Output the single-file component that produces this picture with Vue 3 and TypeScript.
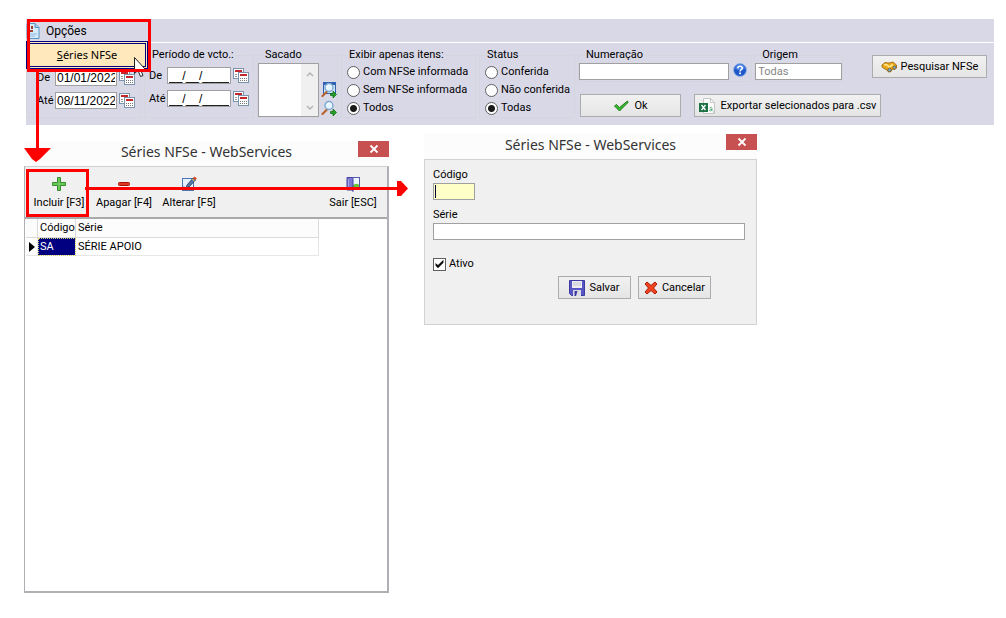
<script setup lang="ts">
import { ref } from 'vue'

interface Choice { value: string; label: string }
interface Serie { codigo: string; serie: string }

const emissaoDe = ref('01/01/2022')
const emissaoAte = ref('08/11/2022')
const vctoDe = ref('__/__/____')
const vctoAte = ref('__/__/____')
const sacado = ref('')
const numeracao = ref('')
const origem = ref('Todas')
const codigo = ref('')
const serie = ref('')
const ativo = ref(true)

const itens = ref('todos')
const itensChoices: Choice[] = [
  { value: 'com', label: 'Com NFSe informada' },
  { value: 'sem', label: 'Sem NFSe informada' },
  { value: 'todos', label: 'Todos' },
]
const status = ref('todas')
const statusChoices: Choice[] = [
  { value: 'conferida', label: 'Conferida' },
  { value: 'nao', label: 'Não conferida' },
  { value: 'todas', label: 'Todas' },
]
const series: Serie[] = [{ codigo: 'SA', serie: 'SÉRIE APOIO' }]
</script>

<template>
  <div class="page">
    <svg class="defs" width="0" height="0" aria-hidden="true">
      <symbol id="calendars" viewBox="0 0 16 16">
        <rect x=".5" y=".5" width="10" height="10" fill="#fff" stroke="#7b93ab" />
        <rect x="2" y="2" width="7" height="2" fill="#c3272b" />
        <path d="M2 6.500h2M2 8.500h2" stroke="#999" />
        <rect x="5.500" y="4.500" width="10" height="10" fill="#fff" stroke="#7b93ab" />
        <rect x="7" y="6" width="7" height="2" fill="#c3272b" />
        <path d="M7 10.500h1M9 10.500h1M11 10.500h1M13 10.500h1M7 12.500h1M9 12.500h1M11 12.500h1M13 12.500h1" stroke="#777" />
      </symbol>
      <symbol id="lens" viewBox="0 0 16 16">
        <path d="M6 9.500 1.500 14" stroke="#b5622b" stroke-width="2.200" stroke-linecap="round" />
        <circle cx="8" cy="5.500" r="4" fill="#e4f5ff" stroke="#7da7cc" stroke-width="1.400" />
        <path d="M6 5q.5-2 2.500-2" fill="none" stroke="#fff" />
        <path d="M9.500 11.500h2.500V9l3.500 3.500L12 16v-2.500H9.500z" fill="#25a128" stroke="#09690c" stroke-width=".7" />
      </symbol>
      <symbol id="close" viewBox="0 0 10 10">
        <path d="m1.500 1.500 7 7m0-7-7 7" stroke="#fff" stroke-width="1.800" />
      </symbol>
    </svg>

    <section class="panel">
      <nav class="menubar">
        <svg class="menu-icon" viewBox="0 0 14 16" aria-hidden="true">
          <path d="M1 .5h8l4 4v11H1z" fill="#d5eafa" stroke="#5c93c0" />
          <path d="M9 .5v4h4" fill="#9fc9e8" stroke="#5c93c0" />
          <path d="M1 3h3v2H1zm4 0h2v3H5zM1 6h2v3H1zm3 1h3v2H4z" fill="#a3402c" />
          <path d="M3 11h8M3 13h6" stroke="#8fbbdc" />
        </svg>
        <button type="button" class="menu-button">Opções</button>
        <button type="button" class="menu-item"><span><u>S</u>éries NFSe</span></button>
      </nav>

      <form class="filters" @submit.prevent>
        <fieldset class="group dates first">
          <legend>&nbsp;</legend>
          <div class="date-row">
            <label for="em-de">De</label><input id="em-de" v-model="emissaoDe" type="text" />
            <button type="button" class="icon-button" aria-label="Calendário"><svg><use href="#calendars" /></svg></button>
          </div>
          <div class="date-row">
            <label for="em-ate">Até</label><input id="em-ate" v-model="emissaoAte" type="text" />
            <button type="button" class="icon-button" aria-label="Calendário"><svg><use href="#calendars" /></svg></button>
          </div>
        </fieldset>

        <fieldset class="group dates">
          <legend>Período de vcto.:</legend>
          <div class="date-row">
            <label for="v-de">De</label><input id="v-de" v-model="vctoDe" type="text" />
            <button type="button" class="icon-button" aria-label="Calendário"><svg><use href="#calendars" /></svg></button>
          </div>
          <div class="date-row">
            <label for="v-ate">Até</label><input id="v-ate" v-model="vctoAte" type="text" />
            <button type="button" class="icon-button" aria-label="Calendário"><svg><use href="#calendars" /></svg></button>
          </div>
        </fieldset>

        <fieldset class="group">
          <legend>Sacado</legend>
          <div class="sacado">
            <div class="memo">
              <textarea v-model="sacado" aria-label="Sacado"></textarea>
              <div class="memo-scroll" aria-hidden="true">
                <svg viewBox="0 0 8 6"><path d="m1 5 3-3 3 3" fill="none" stroke="#b4b4b4" stroke-width="1.500" /></svg>
                <svg viewBox="0 0 8 6"><path d="m1 1 3 3 3-3" fill="none" stroke="#b4b4b4" stroke-width="1.500" /></svg>
              </div>
            </div>
            <div class="sacado-tools">
              <button type="button" class="icon-button" aria-label="Pesquisar sacado">
                <svg viewBox="0 0 16 16">
                  <rect x="2.500" y=".5" width="12" height="11" fill="#cfe2fa" stroke="#2f62b5" />
                  <path d="M3 2h11" stroke="#2f62b5" stroke-width="2" />
                  <use href="#lens" width="16" height="16" />
                </svg>
              </button>
              <button type="button" class="icon-button" aria-label="Localizar sacado"><svg><use href="#lens" /></svg></button>
            </div>
          </div>
        </fieldset>

        <fieldset class="group choices">
          <legend>Exibir apenas itens:</legend>
          <label v-for="c in itensChoices" :key="c.value">
            <input v-model="itens" type="radio" name="itens" :value="c.value" />{{ c.label }}
          </label>
        </fieldset>

        <fieldset class="group choices">
          <legend>Status</legend>
          <label v-for="c in statusChoices" :key="c.value">
            <input v-model="status" type="radio" name="status" :value="c.value" />{{ c.label }}
          </label>
        </fieldset>

        <div class="actions">
          <div class="actions-top">
            <fieldset class="group numeracao">
              <legend>Numeração</legend>
              <div class="field-row">
                <input v-model="numeracao" type="text" aria-label="Numeração" />
                <button type="button" class="icon-button help" aria-label="Ajuda">
                  <svg viewBox="0 0 14 14">
                    <circle cx="7" cy="7" r="6.500" fill="#1d57c8" stroke="#9bb7e6" />
                    <path d="M2 6a5 5 0 0 1 10 0q-5 2-10 0" fill="#5f94ee" opacity=".7" />
                    <path d="M4.800 5.300q.2-2 2.300-2t2.200 1.800q0 1-1.300 1.800-.9.500-.9 1.500" fill="none" stroke="#fff" stroke-width="1.600" />
                    <rect x="6.200" y="9.500" width="1.800" height="1.700" fill="#fff" />
                  </svg>
                </button>
              </div>
            </fieldset>
            <fieldset class="group origem">
              <legend>Origem</legend>
              <div class="field-row"><input v-model="origem" type="text" aria-label="Origem" disabled /></div>
            </fieldset>
            <button type="button" class="button search">
              <svg viewBox="0 0 16 16" width="16" height="16" aria-hidden="true">
                <path d="m1 6 3-2.500 4 .5 4-1 3.500 3v3l-2 1.500-2-.500L10 12.500 7.500 13 6 11 3 9.500 1 8z" fill="#e9a81c" stroke="#946010" stroke-width=".8" />
                <path d="m3 5.500 3 .5 2 2 4-2.500" fill="none" stroke="#ffe88a" stroke-width="1.500" />
                <circle cx="8.500" cy="11" r="1.800" fill="#6fa6cf" stroke="#7e5310" stroke-width=".7" />
                <circle cx="13.500" cy="8.500" r="1.600" fill="#6fa6cf" stroke="#7e5310" stroke-width=".7" />
              </svg>
              Pesquisar NFSe
            </button>
          </div>
          <div class="actions-bottom">
            <button type="submit" class="button ok">
              <svg viewBox="0 0 16 12" width="16" height="12" aria-hidden="true">
                <path d="m1.500 6 2-1.500L6.500 7.500 14.500 1 15 2.500 6.500 11z" fill="#37bd32" stroke="#14700f" stroke-width=".9" />
              </svg>
              Ok
            </button>
            <button type="button" class="button export">
              <svg viewBox="0 0 16 16" width="16" height="16" aria-hidden="true">
                <path d="M4.500.5h7l4 4v11h-11z" fill="#fafafa" stroke="#c6c6c6" />
                <path d="M11.500.5v4h4" fill="none" stroke="#c6c6c6" />
                <rect y="5" width="9" height="9" fill="#1e7145" />
                <path d="m2.500 7 4 5m0-5-4 5" stroke="#fff" stroke-width="1.300" />
                <path d="M10.500 10q2-1.200 2.500.2V13m0-1.500q-2.500-.2-2.500 1 1 1 2.500-.3M14 14h1" fill="none" stroke="#65b587" />
              </svg>
              Exportar selecionados para .csv
            </button>
          </div>
        </div>
      </form>
    </section>

    <main class="workspace">
      <section class="window list-window">
        <header class="titlebar">
          <h2>Séries NFSe - WebServices</h2>
          <button type="button" class="close" aria-label="Fechar"><svg><use href="#close" /></svg></button>
        </header>
        <div class="list-body">
          <div class="tools">
            <button type="button" class="tool">
              <svg viewBox="0 0 16 16" aria-hidden="true"><path d="M6.500 1.500h3v5h5v3h-5v5h-3v-5h-5v-3h5z" fill="#6cc85c" stroke="#348c2b" /></svg>
              Incluir [F3]
            </button>
            <button type="button" class="tool">
              <svg viewBox="0 0 16 16" aria-hidden="true"><rect x="2.500" y="6.500" width="11" height="3" rx="1" fill="#e2331f" stroke="#a31408" /></svg>
              Apagar [F4]
            </button>
            <button type="button" class="tool">
              <svg viewBox="0 0 16 16" aria-hidden="true">
                <rect x="1.500" y="2.500" width="11" height="12" fill="#e6f1fc" stroke="#4a74b4" />
                <path d="M2 14V9l5 5z" fill="#a4c4e8" />
                <path d="m5 12 1-3 6-7 2.500 2-6.500 7z" fill="#5578a8" stroke="#273e63" stroke-width=".8" />
                <path d="m12 2 1.500-1.500L16 2.500 14.500 4z" fill="#e24a22" />
                <path d="m11 3 2.500 2" stroke="#f3cb52" />
              </svg>
              Alterar [F5]
            </button>
            <button type="button" class="tool exit">
              <svg viewBox="0 0 16 16" aria-hidden="true">
                <rect x="5.500" y="1.500" width="9" height="12" fill="#eaf7ff" stroke="#5856ad" />
                <path d="M7 9.500q4-3 7-1V13H7z" fill="#67c83a" />
                <path d="M2 1.500h5l1 1v13l-1-1.500H2z" fill="#7a78d0" stroke="#4441a0" />
                <path d="M3.500 3.500v9" stroke="#aaa8ee" />
              </svg>
              Sair [ESC]
            </button>
          </div>
          <table class="grid">
            <thead>
              <tr><th class="mark"></th><th class="code">Código</th><th>Série</th></tr>
            </thead>
            <tbody>
              <tr v-for="s in series" :key="s.codigo">
                <td class="mark"><svg viewBox="0 0 6 10" aria-hidden="true"><path d="M0 0l6 5-6 5z" /></svg></td>
                <td class="code selected">{{ s.codigo }}</td>
                <td>{{ s.serie }}</td>
              </tr>
            </tbody>
          </table>
        </div>
      </section>

      <section class="window edit-window">
        <header class="titlebar">
          <h2>Séries NFSe - WebServices</h2>
          <button type="button" class="close" aria-label="Fechar"><svg><use href="#close" /></svg></button>
        </header>
        <form class="edit-body" @submit.prevent>
          <label for="codigo">Código</label>
          <div class="code-box">
            <input id="codigo" v-model="codigo" type="text" />
            <span class="caret" aria-hidden="true"></span>
          </div>
          <label for="serie">Série</label>
          <input id="serie" v-model="serie" class="serie" type="text" />
          <label class="check"><input v-model="ativo" type="checkbox" />Ativo</label>
          <div class="edit-actions">
            <button type="submit" class="button">
              <svg viewBox="0 0 16 16" width="16" height="16" aria-hidden="true">
                <path d="M.5.5h15v15H2.500l-2-2z" fill="#5755c4" stroke="#3c3aa0" />
                <rect x="3" y="1" width="10" height="7" fill="#ececf2" />
                <path d="M4 3h8M4 5h8" stroke="#c5c5d0" />
                <path d="M4 10h8v6H4z" fill="#dcdce6" />
                <path d="M5.500 11h3l-1.500 5H5.500z" fill="#3c3aa0" />
              </svg>
              Salvar
            </button>
            <button type="button" class="button">
              <svg viewBox="0 0 14 14" width="14" height="14" aria-hidden="true">
                <path d="m1 3 2-2 4 3.500L11 1l2 2-3.500 4L13 11l-2 2-4-3.500L3 13l-2-2 3.500-4z" fill="#f4411f" stroke="#a81b08" />
              </svg>
              Cancelar
            </button>
          </div>
        </form>
      </section>
    </main>

    <svg class="annotations" width="420" height="230" aria-hidden="true">
      <path d="M134.500 57.500v16l3.500-3 2.500 6 2.500-1-2.500-6h5z" fill="#fff" stroke="#222" />
      <g fill="none" stroke="#f00" stroke-width="3">
        <rect x="28.500" y="20.500" width="121" height="50" />
        <path d="M37.500 71v78" />
        <rect x="27.500" y="170.500" width="60" height="45" />
        <path d="M85 188.500h314" />
      </g>
      <path d="M24 148h27L40 159l-4 3-4-3zM397 181h4l7 7.500-7 7.500h-4z" fill="#f00" />
    </svg>
  </div>
</template>

<style>
body { margin: 0; background: #fff; }
</style>

<style scoped>
.page, .page * { box-sizing: border-box; }
.page {
  position: relative;
  display: flex;
  flex-direction: column;
  min-height: 100vh;
  padding: 19px 12px 25px 24px;
  font: 11px/16px Roboto, "Liberation Sans", sans-serif;
  color: #000;
}
.defs { position: absolute; }
button, input, textarea { font: inherit; color: inherit; margin: 0; }
button { padding: 0; border: 0; background: none; }
input[type="text"] {
  min-width: 0;
  height: 17px;
  padding: 0 2px;
  border: 1px solid #a0a0a0;
  border-radius: 0;
  background: #fff;
  outline: 0;
}
input:disabled { color: #868686; }

.panel { margin-left: 2px; background: #d9d8e7; }
.menubar {
  position: relative;
  display: flex;
  align-items: center;
  gap: 6px;
  height: 24px;
  border-bottom: 1px solid #fff;
}
.menu-icon { width: 14px; height: 16px; }
.menu-button { font-size: 12px; }
.menu-item {
  position: absolute;
  z-index: 1;
  top: 22px;
  left: 0;
  width: 122px;
  height: 28px;
  border: 3px double #00007f;
  background: #ffe8bb;
  font: 11px/16px "Noto Sans", "Open Sans", sans-serif;
}

.filters {
  display: grid;
  grid-template-columns:
    minmax(0, 115fr) minmax(0, 110fr) minmax(0, 81fr)
    minmax(0, 135fr) minmax(0, 96fr) minmax(0, 416fr);
  gap: 3px;
  padding: 4px 0 7px;
}
.group { min-width: 0; margin: 0; padding: 0; border: 1px solid #d5d5dd; }
.group legend { height: 16px; margin-left: 6px; padding: 0 1px; white-space: nowrap; }
.dates { padding: 4px 4px 0; }
.dates legend { margin-left: 2px; }
.dates.first { padding: 6px 5px 0 10px; }
.date-row { display: flex; align-items: center; height: 17px; margin-bottom: 6px; }
.date-row label { flex: none; width: 18px; }
.date-row input[type="text"] { flex: 1; padding: 0 1px; font: 12px/15px "Liberation Sans", sans-serif; }
.icon-button { flex: none; width: 16px; height: 16px; margin-left: 2px; }
.icon-button svg { display: block; width: 100%; height: 100%; }

.sacado { display: flex; }
.memo { display: flex; flex: 1; min-width: 0; height: 54px; border: 1px solid #a0a0a0; background: #fff; }
.memo textarea { flex: 1; min-width: 0; padding: 0; border: 0; resize: none; overflow: hidden; outline: 0; }
.memo-scroll {
  display: flex;
  flex-direction: column;
  justify-content: space-between;
  align-items: center;
  width: 17px;
  padding: 7px 0 5px;
  background: #f0f0f0;
}
.memo-scroll svg { width: 8px; height: 6px; }
.sacado-tools { display: flex; flex-direction: column; justify-content: flex-end; gap: 2px; padding-bottom: 1px; }

.choices { padding: 0 0 0 5px; }
.choices legend { margin-left: 1px; }
.choices label { display: flex; align-items: center; gap: 3px; height: 18px; white-space: nowrap; }
.choices input {
  appearance: none;
  flex: none;
  width: 13px;
  height: 13px;
  border: 1px solid #606060;
  border-radius: 50%;
  background: #fff;
}
.choices input:checked { background: radial-gradient(circle, #1a1a1a 0 3px, #fff 4px); }

.actions { padding-right: 7px; }
.actions-top { display: flex; }
.numeracao { flex: 175 1 0; margin-right: 2px; }
.origem { flex: 88 1 0; }
.field-row { display: flex; padding-bottom: 1px; }
.field-row input[type="text"] { flex: 1 1 0; width: 0; }
.help { width: 14px; height: 14px; margin: 0 4px; }
.actions-bottom { display: flex; gap: 13px; margin: 12px 0 0 2px; }
.button {
  display: flex;
  align-items: center;
  justify-content: center;
  gap: 4px;
  height: 23px;
  border: 1px solid #acacac;
  background: linear-gradient(#f1f1f1, #e5e5e5);
  white-space: nowrap;
}
.search { flex: 115 1 0; margin: 8px 0 0 29px; }
.ok { width: 101px; gap: 5px; }
.export { width: 187px; gap: 6px; }

.workspace {
  display: grid;
  flex: 1;
  grid-template-columns: 365fr 333fr 202fr;
  column-gap: 35px;
  margin-top: 9px;
}
.window { min-width: 0; background: #fcfcfc; }
.list-window { display: flex; flex-direction: column; margin-top: 7px; }
.edit-window { align-self: start; }
.titlebar { position: relative; height: 25px; }
.titlebar h2 {
  margin: 0;
  text-align: center;
  font: 14px/22px "Noto Sans", "Open Sans", sans-serif;
  color: #333;
}
.close {
  position: absolute;
  top: 0;
  right: 0;
  display: grid;
  place-items: center;
  width: 31px;
  height: 16px;
  background: #c75050;
}
.close svg { width: 10px; height: 10px; }

.list-body { flex: 1; border: 2px solid #b0b0b4; border-top: 1px solid #cfcfcf; border-left-width: 1px; background: #fff; }
.tools { display: flex; height: 52px; padding: 9px 6px 0; border-bottom: 2px solid #a9a9a9; background: #f0f0f0; }
.tool {
  display: flex;
  flex-direction: column;
  align-items: center;
  gap: 3px;
  width: 64px;
  margin-right: 1px;
  margin-left: -4px;
  padding: 0 4px;
  white-space: nowrap;
}
.tool + .tool { margin-left: 0; }
.tool svg { width: 16px; height: 16px; }
.tool.exit { width: 56px; margin-right: 0; margin-left: auto; }

.grid { width: 81%; margin-left: 1px; border-collapse: separate; border-spacing: 0; table-layout: fixed; }
.grid th, .grid td {
  height: 18px;
  padding: 0 2px;
  border-right: 1px solid #e6e6e6;
  border-bottom: 1px solid #e6e6e6;
  text-align: left;
  font-weight: 400;
}
.grid th { height: 19px; background: #fcfcfc; border-color: #dadada; }
.grid .mark { width: 12px; padding: 0 0 0 3px; }
.grid .mark svg { display: block; width: 6px; height: 10px; }
.grid .code { width: 38px; }
.grid .selected { background: #000080; color: #fff; outline: 1px dotted #d8d060; outline-offset: -1px; }

.edit-body {
  display: flex;
  flex-direction: column;
  min-height: 166px;
  padding: 7px 11px 0 8px;
  border: 1px solid #d2d2d2;
  background: #f0f0f0;
}
.code-box { position: relative; display: flex; width: 42px; margin-bottom: 7px; }
.code-box input[type="text"] { width: 100%; background: #ffffc8; }
.caret { position: absolute; top: 2px; left: 2px; width: 1px; height: 13px; background: #000040; }
.check { display: flex; align-items: center; gap: 3px; margin-top: 16px; }
.check input {
  appearance: none;
  display: block;
  width: 13px;
  height: 13px;
  border: 1px solid #606060;
  background: #fff;
}
.check input:checked::after {
  content: "";
  display: block;
  width: 11px;
  height: 11px;
  background: #111;
  clip-path: polygon(14% 40%, 36% 60%, 86% 12%, 86% 38%, 36% 88%, 14% 66%);
}
.edit-actions { display: flex; justify-content: flex-end; gap: 7px; margin: 4px 34px 0 0; }
.edit-actions .button { width: 73px; }

.annotations { position: absolute; z-index: 2; top: 0; left: 0; pointer-events: none; }
</style>
